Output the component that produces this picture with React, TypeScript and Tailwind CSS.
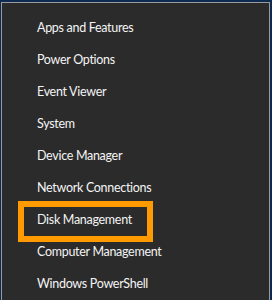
import React from "react";

const items = [
  "Apps and Features",
  "Power Options",
  "Event Viewer",
  "System",
  "Device Manager",
  "Network Connections",
  "Disk Management",
  "Computer Management",
  "Windows PowerShell",
];

export default function App() {
  return (
    <div className="w-[272px] h-[300px] bg-[#0c2a52] pt-[2px] pl-[1px] pr-[2px] overflow-hidden">
      <div
        className="h-full bg-[#2b2b2b] border-t border-l border-r border-[#9a9a9a] pt-[9px]"
        style={{ fontFamily: 'Lato, "Noto Sans", sans-serif' }}
      >
        {items.map((label) => (
          <div key={label} className="relative h-[32px] flex items-center pl-[35px] text-[12.5px] tracking-[-0.3px] text-[#f4f4f4]">
            {label === "Disk Management" && (
              <span className="absolute left-[16px] top-[-3px] w-[135px] h-[41px] border-solid border-[6px] border-[#ff9b00]" />
            )}
            <span className="relative leading-none">{label}</span>
          </div>
        ))}
      </div>
    </div>
  );
}
